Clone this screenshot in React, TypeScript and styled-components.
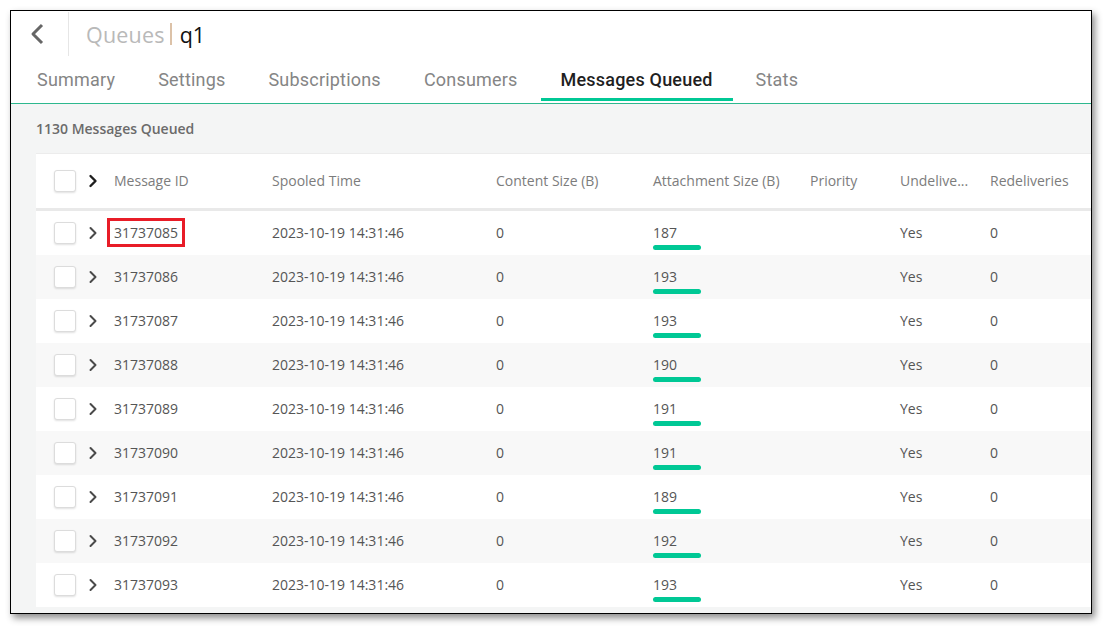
import React from 'react';
import styled, { createGlobalStyle } from 'styled-components';

const GREEN = '#00c895';

type Msg = { id: string; size: number };

const messages: Msg[] = [
  { id: '31737085', size: 187 },
  { id: '31737086', size: 193 },
  { id: '31737087', size: 193 },
  { id: '31737088', size: 190 },
  { id: '31737089', size: 191 },
  { id: '31737090', size: 191 },
  { id: '31737091', size: 189 },
  { id: '31737092', size: 192 },
  { id: '31737093', size: 193 },
];

const tabs = ['Summary', 'Settings', 'Subscriptions', 'Consumers', 'Messages Queued', 'Stats'];

const columns = [
  'Message ID',
  'Spooled Time',
  'Content Size (B)',
  'Attachment Size (B)',
  'Priority',
  'Undelive...',
  'Redeliveries',
];

const GlobalStyle = createGlobalStyle`
  html, body {
    margin: 0;
    padding: 0;
    background: #fff;
  }
  body {
    font-family: 'Open Sans', 'DejaVu Sans', sans-serif;
  }
`;

function Chevron({ dark }: { dark?: boolean }) {
  return (
    <svg width='10' height='14' viewBox='0 0 10 14'>
      <polyline
        points='2.5,2 7.5,7 2.5,12'
        fill='none'
        stroke={dark ? '#1e1e1e' : '#4a4a4a'}
        strokeWidth={dark ? 2.4 : 2}
        strokeLinecap='round'
        strokeLinejoin='round'
      />
    </svg>
  );
}

function App() {
  return (
    <Page>
      <GlobalStyle />
      <Frame>
        <Header>
          <BackButton>
            <svg width='16' height='22' viewBox='0 0 16 22'>
              <polyline
                points='12,2 3,11 12,20'
                fill='none'
                stroke='#666'
                strokeWidth='3'
                strokeLinejoin='round'
              />
            </svg>
          </BackButton>
          <Title>
            <Crumb>Queues</Crumb>
            <Divider />
            <QueueName>q1</QueueName>
          </Title>
        </Header>
        <TabBar>
          {tabs.map((t) => (
            <Tab key={t} active={t === 'Messages Queued'}>
              {t}
            </Tab>
          ))}
        </TabBar>
        <Content>
          <Count>1130 Messages Queued</Count>
          <Table>
            <HeadRow>
              <CheckCell>
                <Checkbox />
              </CheckCell>
              <ChevronCell>
                <Chevron dark />
              </ChevronCell>
              {columns.map((c) => (
                <HeadCell key={c}>{c}</HeadCell>
              ))}
            </HeadRow>
            {messages.map((m, i) => (
              <Row key={m.id} striped={i % 2 === 1}>
                <CheckCell>
                  <Checkbox />
                </CheckCell>
                <ChevronCell>
                  <Chevron />
                </ChevronCell>
                <Cell>
                  {i === 0 ? <Highlight>{m.id}</Highlight> : m.id}
                </Cell>
                <Cell>2023-10-19 14:31:46</Cell>
                <Cell>0</Cell>
                <SizeCell>
                  <span>{m.size}</span>
                  <SizeBar />
                </SizeCell>
                <Cell />
                <Cell>Yes</Cell>
                <Cell>0</Cell>
              </Row>
            ))}
          </Table>
        </Content>
      </Frame>
    </Page>
  );
}

const Page = styled.div`
  padding: 10px;
  width: 1106px;
  height: 627px;
  box-sizing: border-box;
`;

const Frame = styled.div`
  width: 1082px;
  height: 604px;
  box-sizing: border-box;
  border: 1px solid #000;
  box-shadow: 3px 4px 7px rgba(0, 0, 0, 0.45);
  background: #fff;
  overflow: hidden;
  display: flex;
  flex-direction: column;
`;

const Header = styled.div`
  display: flex;
  align-items: center;
  height: 46px;
`;

const BackButton = styled.div`
  width: 58px;
  height: 44px;
  display: flex;
  align-items: center;
  justify-content: center;
  padding-right: 4px;
  box-sizing: border-box;
  border-right: 1px solid #e6e6e6;
`;

const Title = styled.div`
  display: flex;
  align-items: center;
  padding-left: 17px;
  font-family: 'Open Sans', sans-serif;
  font-size: 21.5px;
`;

const Crumb = styled.span`
  color: #b9b9b9;
  letter-spacing: 0.2px;
`;

const Divider = styled.span`
  width: 2px;
  height: 22px;
  background: #dcc2a8;
  margin: 0 8px 0 5px;
`;

const QueueName = styled.span`
  color: #111;
`;

const TabBar = styled.div`
  display: flex;
  height: 47px;
  padding-left: 6px;
  gap: 3px;
  border-bottom: 1px solid #2db88e;
  box-sizing: border-box;
`;

const Tab = styled.div<{ active?: boolean }>`
  display: flex;
  align-items: center;
  padding: 3px 20px 0;
  margin-bottom: 2px;
  font-family: Roboto, sans-serif;
  font-size: 18px;
  letter-spacing: 0.2px;
  color: ${(p) => (p.active ? '#1f1f1f' : '#858585')};
  font-weight: ${(p) => (p.active ? 500 : 400)};
  border-bottom: 3px solid ${(p) => (p.active ? GREEN : 'transparent')};
`;

const Content = styled.div`
  flex: 1;
  background: #f4f5f5;
  padding-left: 25px;
  min-height: 0;
`;

const Count = styled.div`
  height: 49px;
  display: flex;
  align-items: center;
  font-size: 14px;
  font-weight: 600;
  color: #6b6b6b;
`;

const Table = styled.div`
  background: #fff;
  width: 1100px;
`;

const GRID = '22px 38px 158px 224px 157px 157px 90px 90px 120px';

const HeadRow = styled.div`
  display: grid;
  grid-template-columns: ${GRID};
  align-items: center;
  height: 54px;
  padding-left: 18px;
  border-top: 1px solid #ececec;
  border-bottom: 3px solid #e9e9e9;
`;

const Row = styled.div<{ striped?: boolean }>`
  display: grid;
  grid-template-columns: ${GRID};
  align-items: center;
  height: 44px;
  padding-left: 18px;
  background: ${(p) => (p.striped ? '#f8f8f8' : '#fff')};
`;

const CheckCell = styled.div`
  display: flex;
  align-items: center;
`;

const Checkbox = styled.div`
  width: 22px;
  height: 22px;
  box-sizing: border-box;
  border: 1px solid #dcdcdc;
  border-radius: 3px;
  background: #fff;
  box-shadow: 0 1px 2px rgba(0, 0, 0, 0.12);
`;

const ChevronCell = styled.div`
  display: flex;
  align-items: center;
  padding-left: 12px;
`;

const HeadCell = styled.div`
  font-size: 14px;
  color: #7c7c7c;
  white-space: nowrap;
  padding-bottom: 2px;
`;

const Cell = styled.div`
  font-size: 14px;
  color: #555;
  white-space: nowrap;
  line-height: 20px;
`;

const Highlight = styled.span`
  display: inline-block;
  line-height: 17px;
  padding: 3px 4px;
  margin: -3px -4px;
  outline: 3px solid #e81c27;
`;

const SizeCell = styled.div`
  display: flex;
  flex-direction: column;
  align-items: flex-start;
  padding-top: 7px;
  font-size: 14px;
  color: #555;
  line-height: 20px;
`;

const SizeBar = styled.div`
  width: 48px;
  height: 5px;
  margin-top: 2px;
  border-radius: 3px;
  background: ${GREEN};
`;

export default App;
